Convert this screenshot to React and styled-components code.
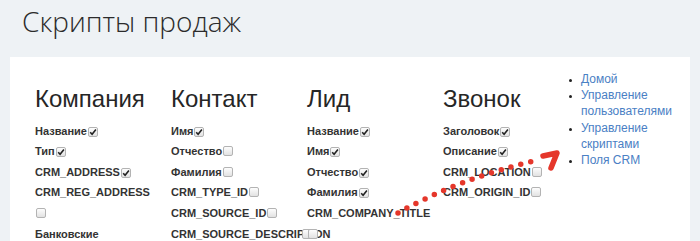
import styled, { createGlobalStyle } from 'styled-components';

const GlobalStyle = createGlobalStyle`
  html, body {
    margin: 0;
    padding: 0;
    background: #eef2f5;
    overflow: hidden;
  }
`;

const columns = [
  {
    title: 'Компания',
    fields: [
      { name: 'Название', on: true },
      { name: 'Тип', on: true },
      { name: 'CRM_ADDRESS', on: true },
      { name: 'CRM_REG_ADDRESS', on: false },
      { name: 'Банковские реквизиты', on: false },
    ],
  },
  {
    title: 'Контакт',
    fields: [
      { name: 'Имя', on: true },
      { name: 'Отчество', on: false },
      { name: 'Фамилия', on: false },
      { name: 'CRM_TYPE_ID', on: false },
      { name: 'CRM_SOURCE_ID', on: false },
      { name: 'CRM_SOURCE_DESCRIPTION', on: false, clip: 130 },
    ],
  },
  {
    title: 'Лид',
    fields: [
      { name: 'Название', on: true },
      { name: 'Имя', on: true },
      { name: 'Отчество', on: true },
      { name: 'Фамилия', on: true },
      { name: 'CRM_COMPANY_TITLE', on: false },
    ],
  },
  {
    title: 'Звонок',
    fields: [
      { name: 'Заголовок', on: true },
      { name: 'Описание', on: true },
      { name: 'CRM_LOCATION', on: false },
      { name: 'CRM_ORIGIN_ID', on: false },
    ],
  },
];

const links = ['Домой', 'Управление пользователями', 'Управление скриптами', 'Поля CRM'];

const CheckBox = ({ on }) => (
  <Box>
    {on && (
      <svg width='8' height='8' viewBox='0 0 8 8'>
        <path d='M1.2 4.2 L3.1 6.2 L6.9 1.4' fill='none' stroke='#222' strokeWidth='1.6' />
      </svg>
    )}
  </Box>
);

const App = () => {
  return (
    <Page>
      <GlobalStyle />
      <Title>Скрипты продаж</Title>
      <Panel>
        <Columns>
          {columns.map((col) => (
            <Column key={col.title}>
              <Heading>{col.title}</Heading>
              {col.fields.map((f) => (
                <Field key={f.name} $nowrap={!!f.clip}>
                  <Label $width={f.clip}>{f.name}</Label>
                  <CheckBox on={f.on} />
                </Field>
              ))}
            </Column>
          ))}
        </Columns>
        <Nav>
          {links.map((l) => (
            <li key={l}>
              <a href='#'>{l}</a>
            </li>
          ))}
        </Nav>
        <Arrow width='700' height='241' viewBox='0 0 700 241'>
          <path
            d='M398 213 Q 460 178 538 160'
            fill='none'
            stroke='#e5372b'
            strokeWidth='5.5'
            strokeLinecap='round'
            strokeDasharray='0 10.2'
          />
          <path
            d='M543 156 L557 153 L551 168'
            fill='none'
            stroke='#e5372b'
            strokeWidth='5.5'
            strokeLinecap='round'
            strokeLinejoin='round'
          />
        </Arrow>
      </Panel>
    </Page>
  );
};

const Page = styled.div`
  position: relative;
  height: 241px;
  padding-top: 6px;
  box-sizing: border-box;
`;

const Title = styled.h1`
  margin: 0 0 0 22px;
  font-family: 'Open Sans', sans-serif;
  font-weight: 300;
  font-size: 28px;
  line-height: 30.8px;
  color: #2b2b2b;
`;

const Panel = styled.div`
  display: flex;
  margin: 20.5px 10px 0;
  height: 200px;
  background: #fff;
`;

const Columns = styled.div`
  display: grid;
  grid-template-columns: repeat(4, 136px);
  align-items: start;
  padding: 29px 0 0 25px;
  width: 571px;
  flex-shrink: 0;
  box-sizing: border-box;
`;

const Column = styled.div`
  padding-right: 14px;
`;

const Heading = styled.h2`
  margin: 0 0 8px;
  font-family: 'Liberation Sans', Arial, sans-serif;
  font-weight: normal;
  font-size: 24px;
  line-height: 26.4px;
  color: #262626;
`;

const Field = styled.div`
  font-family: 'Liberation Sans', Arial, sans-serif;
  font-weight: bold;
  font-size: 11px;
  line-height: 20.6px;
  color: #333;
  white-space: ${(p) => (p.$nowrap ? 'nowrap' : 'normal')};
`;

const Label = styled.span`
  display: ${(p) => (p.$width ? 'inline-block' : 'inline')};
  width: ${(p) => (p.$width ? `${p.$width}px` : 'auto')};
`;

const Box = styled.span`
  display: inline-block;
  box-sizing: border-box;
  width: 10px;
  height: 10px;
  margin-left: 1px;
  vertical-align: -1px;
  border: 1px solid #b3b3b3;
  border-radius: 2px;
  background: linear-gradient(#fdfdfd, #e2e2e2);
  line-height: 0;
`;

const Nav = styled.ul`
  margin: 13.5px 0 0;
  padding: 0 10px 0 0;
  flex: 1;
  list-style: disc outside;
  font-family: 'Liberation Sans', Arial, sans-serif;
  font-size: 12px;
  line-height: 16.3px;
  color: #222;

  li::marker {
    font-size: 9px;
  }

  a {
    color: #4a80c4;
    text-decoration: none;
  }
`;

const Arrow = styled.svg`
  position: absolute;
  left: 0;
  top: 0;
  pointer-events: none;
`;

export default App;
